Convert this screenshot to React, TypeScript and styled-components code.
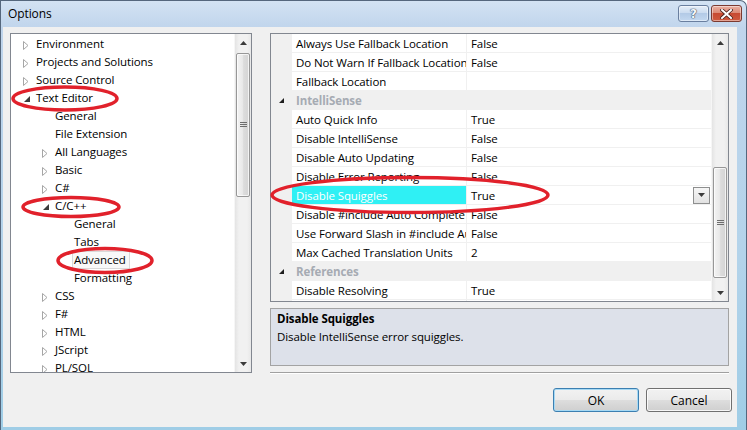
import React from 'react';
import styled, { createGlobalStyle } from 'styled-components';

const GlobalStyle = createGlobalStyle`
  html, body {
    margin: 0;
    padding: 0;
    overflow: hidden;
  }
  body {
    font-family: 'Open Sans', 'Noto Sans', 'Liberation Sans', sans-serif;
    font-size: 11.5px;
    letter-spacing: -0.1px;
    color: #000;
  }
  * {
    box-sizing: border-box;
  }
`;

type NodeState = 'collapsed' | 'expanded' | 'leaf';

interface TreeNode {
  label: string;
  level: number;
  state: NodeState;
  selected?: boolean;
}

const treeNodes: TreeNode[] = [
  { label: 'Environment', level: 0, state: 'collapsed' },
  { label: 'Projects and Solutions', level: 0, state: 'collapsed' },
  { label: 'Source Control', level: 0, state: 'collapsed' },
  { label: 'Text Editor', level: 0, state: 'expanded' },
  { label: 'General', level: 1, state: 'leaf' },
  { label: 'File Extension', level: 1, state: 'leaf' },
  { label: 'All Languages', level: 1, state: 'collapsed' },
  { label: 'Basic', level: 1, state: 'collapsed' },
  { label: 'C#', level: 1, state: 'collapsed' },
  { label: 'C/C++', level: 1, state: 'expanded' },
  { label: 'General', level: 2, state: 'leaf' },
  { label: 'Tabs', level: 2, state: 'leaf' },
  { label: 'Advanced', level: 2, state: 'leaf', selected: true },
  { label: 'Formatting', level: 2, state: 'leaf' },
  { label: 'CSS', level: 1, state: 'collapsed' },
  { label: 'F#', level: 1, state: 'collapsed' },
  { label: 'HTML', level: 1, state: 'collapsed' },
  { label: 'JScript', level: 1, state: 'collapsed' },
  { label: 'PL/SOL', level: 1, state: 'collapsed' },
];

type GridItem =
  | { kind: 'category'; label: string }
  | { kind: 'property'; name: string; value: string; selected?: boolean };

const gridItems: GridItem[] = [
  { kind: 'property', name: 'Always Use Fallback Location', value: 'False' },
  { kind: 'property', name: 'Do Not Warn If Fallback Location', value: 'False' },
  { kind: 'property', name: 'Fallback Location', value: '' },
  { kind: 'category', label: 'IntelliSense' },
  { kind: 'property', name: 'Auto Quick Info', value: 'True' },
  { kind: 'property', name: 'Disable IntelliSense', value: 'False' },
  { kind: 'property', name: 'Disable Auto Updating', value: 'False' },
  { kind: 'property', name: 'Disable Error Reporting', value: 'False' },
  { kind: 'property', name: 'Disable Squiggles', value: 'True', selected: true },
  { kind: 'property', name: 'Disable #include Auto Complete', value: 'False' },
  { kind: 'property', name: 'Use Forward Slash in #include Auto Complete', value: 'False' },
  { kind: 'property', name: 'Max Cached Translation Units', value: '2' },
  { kind: 'category', label: 'References' },
  { kind: 'property', name: 'Disable Resolving', value: 'True' },
  { kind: 'property', name: 'Ignore Resolving Errors', value: 'False' },
];

/* ---------- window frame ---------- */

const Window = styled.div`
  position: relative;
  width: 747px;
  height: 430px;
  display: flex;
  flex-direction: column;
  background: linear-gradient(180deg, #d3e2f3 0px, #c0d5ec 27px, #b3d3ea 60%, #9fcde6 100%);
  border-top: 1px solid #55677d;
  border-left: 1px solid #55677d;
  border-right: 1px solid #55677d;
  border-top-right-radius: 7px;
  overflow: hidden;
`;

const TitleBar = styled.div`
  display: flex;
  align-items: flex-start;
  height: 26px;
  padding: 0 4px 0 7px;
  flex-shrink: 0;
`;

const Title = styled.span`
  flex: 1;
  margin-top: 5px;
  line-height: 16px;
  font-size: 12px;
  color: #000;
`;

const CaptionButtons = styled.div`
  display: flex;
  gap: 2px;
  margin-top: 4px;
`;

const CaptionButton = styled.div<{ $variant: 'help' | 'close' }>`
  width: 31px;
  height: 17px;
  display: flex;
  align-items: center;
  justify-content: center;
  border-radius: 3px;
  border: 1px solid ${({ $variant }) => ($variant === 'close' ? '#7b3a31' : '#6a7f9f')};
  box-shadow: inset 0 0 0 1px rgba(255, 255, 255, 0.45);
  background: ${({ $variant }) =>
    $variant === 'close'
      ? 'linear-gradient(180deg, #eab0a2 0%, #dc8a76 45%, #c74a32 50%, #cf5a40 100%)'
      : 'linear-gradient(180deg, #e6eef8 0%, #cbdcf0 45%, #b3cae6 50%, #c3d8f0 100%)'};
  font-family: 'DejaVu Sans', sans-serif;
  font-weight: bold;
  font-size: 12px;
  letter-spacing: 0;
  color: #f4f7fb;
  text-shadow: 0 0 1px #3d4d63, 0 0 1px #3d4d63, 0 0 1px #3d4d63;
`;

const Client = styled.div`
  flex: 1;
  display: flex;
  flex-direction: column;
  margin: 0 9px 3px 2px;
  background: #f0f0f0;
  padding: 6px 0 0 7px;
`;

const Body = styled.div`
  display: grid;
  grid-template-columns: 242px 459px;
  column-gap: 18px;
  align-items: start;
`;

/* ---------- scrollbars ---------- */

const ScrollBar = styled.div`
  width: 17px;
  display: flex;
  flex-direction: column;
  flex-shrink: 0;
  background: linear-gradient(90deg, #e4e4e4 0%, #f1f1f1 25%, #f1f1f1 75%, #e8e8e8 100%);
  border-left: 1px solid #f6f6f6;
`;

const ScrollArrow = styled.div`
  height: 17px;
  display: flex;
  align-items: center;
  justify-content: center;
  flex-shrink: 0;
`;

const ScrollTrack = styled.div`
  flex: 1;
  padding: 0 1px;
`;

const ScrollThumb = styled.div<{ $offset: number; $size: number }>`
  margin-top: ${({ $offset }) => $offset}px;
  height: ${({ $size }) => $size}px;
  border: 1px solid #979797;
  border-radius: 2px;
  background: linear-gradient(90deg, #f3f3f3 0%, #e9e9e9 45%, #dcdcdc 55%, #d4d4d4 100%);
  box-shadow: inset 0 0 0 1px rgba(255, 255, 255, 0.7);
  display: flex;
  align-items: center;
  justify-content: center;
`;

const Arrow: React.FC<{ dir: 'up' | 'down' }> = ({ dir }) => (
  <svg width="7" height="4" viewBox="0 0 7 4">
    {dir === 'up' ? <path d="M3.5 0 L7 4 L0 4 Z" fill="#3b3b3b" /> : <path d="M0 0 L7 0 L3.5 4 Z" fill="#3b3b3b" />}
  </svg>
);

const Grip = () => (
  <svg width="7" height="6" viewBox="0 0 7 6">
    <rect x="0" y="0" width="7" height="1" fill="#6e6e6e" />
    <rect x="0" y="2" width="7" height="1" fill="#6e6e6e" />
    <rect x="0" y="4" width="7" height="1" fill="#6e6e6e" />
  </svg>
);

const VScroll: React.FC<{ offset: number; size: number }> = ({ offset, size }) => (
  <ScrollBar>
    <ScrollArrow>
      <Arrow dir="up" />
    </ScrollArrow>
    <ScrollTrack>
      <ScrollThumb $offset={offset} $size={size}>
        <Grip />
      </ScrollThumb>
    </ScrollTrack>
    <ScrollArrow>
      <Arrow dir="down" />
    </ScrollArrow>
  </ScrollBar>
);

/* ---------- tree ---------- */

const TreeBox = styled.div`
  display: flex;
  height: 340px;
  border: 1px solid #828790;
  background: #fff;
`;

const TreeList = styled.ul`
  flex: 1;
  margin: 0;
  padding: 1px 0 0;
  list-style: none;
  overflow: hidden;
`;

const TreeRow = styled.li<{ $level: number }>`
  display: flex;
  align-items: center;
  height: 18px;
  padding-left: ${({ $level }) => 12 + $level * 19}px;
  white-space: nowrap;
`;

const Expander = styled.span`
  width: 11px;
  height: 18px;
  display: flex;
  align-items: center;
  flex-shrink: 0;
`;

const TreeLabel = styled.span<{ $selected?: boolean }>`
  height: 18px;
  line-height: 16px;
  padding: 0 3px 0 1px;
  border: 1px solid ${({ $selected }) => ($selected ? '#d9d9d9' : 'transparent')};
  background: ${({ $selected }) => ($selected ? '#f8f8f8' : 'transparent')};
`;

const ExpanderGlyph: React.FC<{ state: NodeState }> = ({ state }) => {
  if (state === 'collapsed') {
    return (
      <svg width="6" height="9" viewBox="0 0 6 9" style={{ marginTop: 2 }}>
        <path d="M0.5 0.5 L5 4.5 L0.5 8.5 Z" fill="#fff" stroke="#a6a6a6" />
      </svg>
    );
  }
  if (state === 'expanded') {
    return (
      <svg width="8" height="6" viewBox="0 0 8 6" style={{ marginTop: 1 }}>
        <path d="M7 0 L7 6 L1 6 Z" fill="#3c3c3c" />
      </svg>
    );
  }
  return null;
};

/* ---------- property grid ---------- */

const RightColumn = styled.div`
  display: flex;
  flex-direction: column;
`;

const GridBox = styled.div`
  display: flex;
  height: 269px;
  border: 1px solid #828790;
  background: #fff;
`;

const GridRows = styled.div`
  flex: 1;
  overflow: hidden;
`;

const PropRow = styled.div`
  display: grid;
  grid-template-columns: 21px 175px 1fr;
  height: 19px;
`;

const Gutter = styled.div`
  background: #f0f0f0;
  display: flex;
  align-items: center;
  justify-content: center;
`;

const Cell = styled.div<{ $selected?: boolean; $divider?: boolean }>`
  display: flex;
  align-items: center;
  padding-left: 4px;
  overflow: hidden;
  white-space: nowrap;
  border-bottom: 1px solid #f0f0f0;
  border-right: ${({ $divider }) => ($divider ? '1px solid #f0f0f0' : 'none')};
  background: ${({ $selected }) => ($selected ? '#2ff0f4' : '#fff')};
  color: ${({ $selected }) => ($selected ? '#fff' : '#000')};
`;

const ValueText = styled.span`
  flex: 1;
`;

const DropButton = styled.div`
  width: 17px;
  height: 17px;
  margin-right: 1px;
  border: 1px solid #8e8f8f;
  background: linear-gradient(180deg, #f6f6f6, #e2e2e2);
  display: flex;
  align-items: center;
  justify-content: center;
`;

const CategoryRow = styled.div`
  display: grid;
  grid-template-columns: 21px 1fr;
  height: 19px;
  background: #f0f0f0;
`;

const CategoryLabel = styled.div`
  display: flex;
  align-items: center;
  padding-left: 4px;
  font-weight: bold;
  color: #a6abb3;
`;

const Description = styled.div`
  margin-top: 6px;
  height: 58px;
  border: 1px solid #a3a3a3;
  background: #dde1ea;
  padding: 1px 6px;
  line-height: 18px;
`;

const DescTitle = styled.div`
  font-weight: bold;
`;

const Separator = styled.div`
  margin-top: 6px;
  height: 0;
  border-top: 1px solid #a0a0a0;
  border-bottom: 1px solid #fff;
`;

/* ---------- footer ---------- */

const Footer = styled.div`
  display: flex;
  justify-content: flex-end;
  gap: 7px;
  margin-top: 14px;
  padding-right: 5px;
`;

const Button = styled.button<{ $default?: boolean }>`
  width: 86px;
  height: 24px;
  font: inherit;
  font-size: 12px;
  color: #000;
  border-radius: 3px;
  border: 1px solid ${({ $default }) => ($default ? '#3c7fb1' : '#707070')};
  background: linear-gradient(180deg, #f2f2f2 0%, #ebebeb 48%, #dddddd 52%, #cfcfcf 100%);
  box-shadow: inset 0 0 0 1px ${({ $default }) => ($default ? '#a6d9f4' : 'rgba(255,255,255,0.8)')};
  padding: 0;
`;

/* ---------- red markup ellipses ---------- */

const Markup = styled.svg`
  position: absolute;
  left: -1px;
  top: -1px;
  pointer-events: none;
`;

const marks = [
  { cx: 65, cy: 98.5, rx: 52, ry: 11.5 },
  { cx: 71, cy: 207, rx: 48, ry: 9.5 },
  { cx: 105, cy: 260.5, rx: 47, ry: 12 },
  { cx: 410, cy: 195, rx: 138, ry: 17.5 },
];

export default function App() {
  return (
    <>
      <GlobalStyle />
      <Window>
        <TitleBar>
          <Title>Options</Title>
          <CaptionButtons>
            <CaptionButton $variant="help">?</CaptionButton>
            <CaptionButton $variant="close">
              <svg width="13" height="10" viewBox="0 0 13 10">
                <path
                  d="M2 1 L11 9 M11 1 L2 9"
                  stroke="#4a2420"
                  strokeWidth="3.6"
                  strokeLinecap="square"
                />
                <path d="M2 1 L11 9 M11 1 L2 9" stroke="#fff" strokeWidth="2" strokeLinecap="square" />
              </svg>
            </CaptionButton>
          </CaptionButtons>
        </TitleBar>

        <Client>
          <Body>
            <TreeBox>
              <TreeList>
                {treeNodes.map((node, i) => (
                  <TreeRow key={i} $level={node.level}>
                    <Expander>
                      <ExpanderGlyph state={node.state} />
                    </Expander>
                    <TreeLabel $selected={node.selected}>{node.label}</TreeLabel>
                  </TreeRow>
                ))}
              </TreeList>
              <VScroll offset={2} size={144} />
            </TreeBox>

            <RightColumn>
              <GridBox>
                <GridRows>
                  {gridItems.map((item, i) =>
                    item.kind === 'category' ? (
                      <CategoryRow key={i}>
                        <Gutter>
                          <svg width="5" height="5" viewBox="0 0 5 5">
                            <path d="M5 0 L5 5 L0 5 Z" fill="#1e1e1e" />
                          </svg>
                        </Gutter>
                        <CategoryLabel>{item.label}</CategoryLabel>
                      </CategoryRow>
                    ) : (
                      <PropRow key={i}>
                        <Gutter />
                        <Cell $divider $selected={item.selected}>
                          {item.name}
                        </Cell>
                        <Cell>
                          <ValueText>{item.value}</ValueText>
                          {item.selected && (
                            <DropButton>
                              <Arrow dir="down" />
                            </DropButton>
                          )}
                        </Cell>
                      </PropRow>
                    ),
                  )}
                </GridRows>
                <VScroll offset={116} size={111} />
              </GridBox>

              <Description>
                <DescTitle>Disable Squiggles</DescTitle>
                <div>Disable IntelliSense error squiggles.</div>
              </Description>
              <Separator />
            </RightColumn>
          </Body>

          <Footer>
            <Button $default>OK</Button>
            <Button>Cancel</Button>
          </Footer>
        </Client>

        <Markup width="747" height="430" viewBox="0 0 747 430">
          {marks.map((m, i) => (
            <ellipse
              key={i}
              cx={m.cx}
              cy={m.cy}
              rx={m.rx}
              ry={m.ry}
              fill="none"
              stroke="#e1212b"
              strokeWidth="3.5"
            />
          ))}
        </Markup>
      </Window>
    </>
  );
}
